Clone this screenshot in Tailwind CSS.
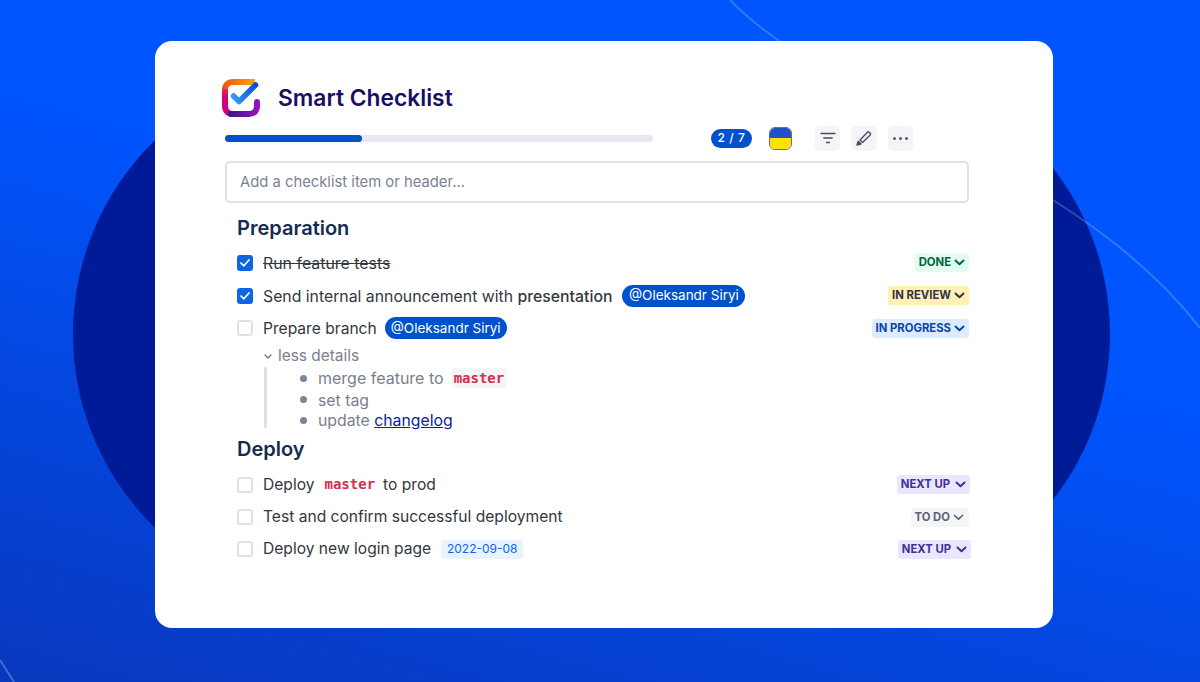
<!DOCTYPE html>
<html lang="en">
<head>
  <meta charset="UTF-8" />
  <meta name="viewport" content="width=device-width, initial-scale=1.0" />
  <title>Smart Checklist</title>
  <script src="https://cdn.jsdelivr.net/npm/@tailwindcss/browser@4"></script>
</head>
<body class="m-0 overflow-hidden font-['Inter',sans-serif]">
  <div class="relative w-[1200px] h-[682px] overflow-hidden bg-linear-[195deg] from-[#0055ff] from-40% to-[#0838bd] pt-[41px] pl-[155px]">
    <!-- background shapes -->
    <div class="absolute left-[73px] top-[64px] w-[1037px] h-[540px] rounded-full bg-[#001b98]"></div>
    <svg class="absolute inset-0" width="1200" height="682" viewBox="0 0 1200 682" fill="none">
      <path d="M730 0C790 62 900 110 1053 200C1100 230 1155 270 1200 328" stroke="#ffffff" stroke-opacity="0.2" stroke-width="2" />
      <path d="M0 660L14 682" stroke="#ffffff" stroke-opacity="0.25" stroke-width="2" />
    </svg>

    <!-- card -->
    <div class="relative w-[898px] h-[587px] bg-white rounded-[17px] pl-[70px] pr-[84px] pt-[38px]">
      <!-- title -->
      <div class="flex items-center h-[37px] -ml-[3px] gap-[18px]">
        <svg width="38" height="38" viewBox="0 0 38 38" fill="none">
          <defs>
            <linearGradient id="logoTop" x1="0" y1="0" x2="38" y2="0" gradientUnits="userSpaceOnUse">
              <stop offset="0" stop-color="#ee4f1c" />
              <stop offset="1" stop-color="#fbb400" />
            </linearGradient>
            <linearGradient id="logoLeft" x1="0" y1="4" x2="0" y2="36" gradientUnits="userSpaceOnUse">
              <stop offset="0" stop-color="#e8462f" />
              <stop offset="0.45" stop-color="#d3007a" />
              <stop offset="1" stop-color="#c8008c" />
            </linearGradient>
            <linearGradient id="logoBottom" x1="5" y1="0" x2="37" y2="0" gradientUnits="userSpaceOnUse">
              <stop offset="0" stop-color="#2c1a7a" />
              <stop offset="1" stop-color="#9a10c4" />
            </linearGradient>
            <linearGradient id="logoCheck" x1="10" y1="18" x2="36" y2="4" gradientUnits="userSpaceOnUse">
              <stop offset="0" stop-color="#2f9bff" />
              <stop offset="1" stop-color="#0a45c8" />
            </linearGradient>
          </defs>
          <path d="M3 11C3 6 6 3 11 3H33" stroke="url(#logoTop)" stroke-width="6" />
          <path d="M3 10V27C3 32 6 35 11 35" stroke="url(#logoLeft)" stroke-width="6" />
          <path d="M9 35H27C32 35 35 32 35 27V23" stroke="url(#logoBottom)" stroke-width="6" stroke-linecap="round" />
          <path d="M11.5 17L17 22.5L33.5 6" stroke="url(#logoCheck)" stroke-width="5.5" stroke-linecap="round" stroke-linejoin="round" />
        </svg>
        <h1 class="text-[22.8px] leading-none font-semibold text-[#1a0e63] translate-y-[1px]">Smart Checklist</h1>
      </div>

      <!-- progress and toolbar -->
      <div class="flex items-center h-[26px] mt-[9px]">
        <div class="w-[428px] h-[7px] rounded-full bg-[#e6e8f0]">
          <div class="h-full rounded-full bg-[#0052cc]" style="width: 32%"></div>
        </div>
        <span class="ml-[58px] w-[41px] h-[19px] flex items-center justify-center rounded-full bg-[#0052cc] text-white text-[12px] font-medium tracking-[0.6px]">2 / 7</span>
        <div class="ml-[17px] w-[23px] h-[23px] rounded-[6px] overflow-hidden border border-[#6b6f80] flex flex-col">
          <div class="h-[10px] bg-[#1f52c8]"></div>
          <div class="flex-1 bg-[#ffe200]"></div>
        </div>
        <button class="ml-[23px] w-[25px] h-[25px] rounded-[5px] bg-[#f5f5f7] flex items-center justify-center">
          <svg width="16" height="14" viewBox="0 0 16 14" fill="none" stroke="#4a4d63" stroke-width="1.5" stroke-linecap="round"><path d="M1 2.5H15M3.8 7H12.2M6.6 11.5H9.4" /></svg>
        </button>
        <button class="ml-[11px] w-[26px] h-[25px] rounded-[5px] bg-[#f5f5f7] flex items-center justify-center">
          <svg width="16" height="16" viewBox="0 0 16 16" fill="none" stroke="#4a4d63" stroke-width="1.4" stroke-linejoin="round"><path d="M4 10L11.5 2.2C12 1.7 12.6 1.7 13.1 2.2L14.2 3.3C14.7 3.8 14.7 4.4 14.2 4.9L6.5 12.5Z" /><path d="M1 15L2.2 11.3L5 14Z" fill="#4a4d63" /></svg>
        </button>
        <button class="ml-[11px] w-[25px] h-[25px] rounded-[5px] bg-[#f5f5f7] flex items-center justify-center">
          <svg width="17" height="5" viewBox="0 0 17 5" fill="#555a70"><circle cx="2.5" cy="2.5" r="1.5" /><circle cx="8.5" cy="2.5" r="1.5" /><circle cx="14.5" cy="2.5" r="1.5" /></svg>
        </button>
      </div>

      <!-- add item -->
      <div class="mt-[10px] h-[42px] border-2 border-[#dfe1e6] rounded-[5px] flex items-center pl-[13px] text-[14.8px] text-[#7a8296]">Add a checklist item or header...</div>

      <!-- Preparation -->
      <h2 class="mt-[11px] ml-[12px] h-[27px] flex items-center text-[20px] font-semibold text-[#172b4d]">Preparation</h2>

      <div class="mt-[5px] flex items-center h-[33px] text-[15.9px] text-[#333740]">
        <span class="ml-[12px] w-[16px] h-[16px] rounded-[3px] bg-[#0c66e4] flex items-center justify-center">
          <svg width="10" height="8" viewBox="0 0 10 8" fill="none" stroke="#ffffff" stroke-width="1.7" stroke-linecap="round" stroke-linejoin="round"><path d="M1 4L3.8 6.8L9 1" /></svg>
        </span>
        <span class="ml-[10px] translate-y-px line-through">Run feature tests</span>
        <span class="ml-auto h-[19px] pl-[4px] pr-[4px] rounded-[3px] bg-[#e3fcef] flex items-center gap-[3px] text-[11.3px] font-bold text-[#006644]">DONE
          <svg width="11" height="7" viewBox="0 0 11 7" fill="none" stroke="currentColor" stroke-width="2" stroke-linecap="round" stroke-linejoin="round"><path d="M1.5 1.5L5.5 5.2L9.5 1.5" /></svg>
        </span>
      </div>

      <div class="flex items-center h-[33px] text-[15.8px] text-[#333740]">
        <span class="ml-[12px] w-[16px] h-[16px] rounded-[3px] bg-[#0c66e4] flex items-center justify-center">
          <svg width="10" height="8" viewBox="0 0 10 8" fill="none" stroke="#ffffff" stroke-width="1.7" stroke-linecap="round" stroke-linejoin="round"><path d="M1 4L3.8 6.8L9 1" /></svg>
        </span>
        <span class="ml-[10px] translate-y-px">Send internal announcement with <span class="font-medium">presentation</span></span>
        <span class="ml-[10px] h-[22px] w-[123px] justify-center rounded-full bg-[#0052cc] text-white text-[13.5px] flex items-center">@Oleksandr Siryi</span>
        <span class="ml-auto h-[19px] pl-[4px] pr-[4px] rounded-[3px] bg-[#fff0b3] flex items-center gap-[3px] text-[11.3px] font-bold text-[#2f3448]">IN REVIEW
          <svg width="11" height="7" viewBox="0 0 11 7" fill="none" stroke="currentColor" stroke-width="2" stroke-linecap="round" stroke-linejoin="round"><path d="M1.5 1.5L5.5 5.2L9.5 1.5" /></svg>
        </span>
      </div>

      <div class="flex items-center h-[32px] text-[15.6px] text-[#333740]">
        <span class="ml-[12px] w-[16px] h-[16px] rounded-[3px] border-2 border-[#dfe1e8] bg-white"></span>
        <span class="ml-[10px] translate-y-px">Prepare branch</span>
        <span class="ml-[8px] h-[22px] w-[122px] justify-center rounded-full bg-[#0052cc] text-white text-[13.5px] flex items-center">@Oleksandr Siryi</span>
        <span class="ml-auto h-[19px] pl-[4px] pr-[4px] rounded-[3px] bg-[#deebff] flex items-center gap-[3px] text-[11.3px] font-bold text-[#0747a6]">IN PROGRESS
          <svg width="11" height="7" viewBox="0 0 11 7" fill="none" stroke="currentColor" stroke-width="2" stroke-linecap="round" stroke-linejoin="round"><path d="M1.5 1.5L5.5 5.2L9.5 1.5" /></svg>
        </span>
      </div>

      <!-- details -->
      <div class="mt-[1px] ml-[39px] h-[22px] flex items-center text-[15.4px] text-[#7a7f8c]">
        <svg width="8" height="5" viewBox="0 0 8 5" fill="none" stroke="#6b7080" stroke-width="1.2" stroke-linecap="round" stroke-linejoin="round"><path d="M1 1L4 4L7 1" /></svg>
        <span class="ml-[6px]">less details</span>
      </div>
      <ul class="ml-[39px] border-l-[3px] border-[#dfe1e6] h-[61px] pl-[33px] text-[15.8px] text-[#7a7f8c]">
        <li class="h-[22px] flex items-center">
          <span class="w-[7px] h-[7px] rounded-full bg-[#7a86a0]"></span>
          <span class="ml-[11px] text-[16px]">merge feature to</span>
          <code class="ml-[8px] h-[20px] px-[2px] rounded-[3px] bg-[#f4f5f7] flex items-center text-[14px] font-bold text-[#d32d4f] font-['DejaVu_Sans_Mono',monospace]">master</code>
        </li>
        <li class="h-[21px] flex items-center">
          <span class="w-[7px] h-[7px] rounded-full bg-[#7a86a0]"></span>
          <span class="ml-[11px] translate-y-px">set tag</span>
        </li>
        <li class="h-[21px] flex items-center">
          <span class="w-[7px] h-[7px] rounded-full bg-[#7a86a0]"></span>
          <span class="ml-[11px]">update <a class="text-[#0a1f9e] underline">changelog</a></span>
        </li>
      </ul>

      <!-- Deploy -->
      <h2 class="mt-[7px] ml-[12px] h-[27px] flex items-center text-[20px] font-semibold text-[#172b4d]">Deploy</h2>

      <div class="mt-[6px] flex items-center h-[33px] text-[15.6px] text-[#333740]">
        <span class="ml-[12px] w-[16px] h-[16px] rounded-[3px] border-2 border-[#dfe1e8] bg-white"></span>
        <span class="ml-[10px]">Deploy</span>
        <code class="ml-[10px] text-[14px] font-bold text-[#d32d4f] font-['DejaVu_Sans_Mono',monospace]">master</code>
        <span class="ml-[8px]">to prod</span>
        <span class="ml-auto -mr-[1px] h-[19px] pl-[4px] pr-[4px] rounded-[3px] bg-[#eae6ff] flex items-center gap-[5px] text-[11.3px] font-bold text-[#403294]">NEXT UP
          <svg width="11" height="7" viewBox="0 0 11 7" fill="none" stroke="currentColor" stroke-width="2" stroke-linecap="round" stroke-linejoin="round"><path d="M1.5 1.5L5.5 5.2L9.5 1.5" /></svg>
        </span>
      </div>

      <div class="flex items-center h-[32px] text-[15.6px] text-[#333740]">
        <span class="ml-[12px] w-[16px] h-[16px] rounded-[3px] border-2 border-[#dfe1e8] bg-white"></span>
        <span class="ml-[10px]">Test and confirm successful deployment</span>
        <span class="ml-auto h-[19px] pl-[4px] pr-[5px] rounded-[3px] bg-[#f4f5f7] flex items-center gap-[3px] text-[11.3px] font-bold text-[#5e6278]">TO DO
          <svg width="11" height="7" viewBox="0 0 11 7" fill="none" stroke="currentColor" stroke-width="1.7" stroke-linecap="round" stroke-linejoin="round"><path d="M1.5 1.5L5.5 5.2L9.5 1.5" /></svg>
        </span>
      </div>

      <div class="flex items-center h-[32px] text-[15.6px] text-[#333740]">
        <span class="ml-[12px] w-[16px] h-[16px] rounded-[3px] border-2 border-[#dfe1e8] bg-white"></span>
        <span class="ml-[10px]">Deploy new login page</span>
        <span class="ml-[10px] h-[19px] w-[82px] justify-center rounded-[3px] bg-[#e9f2ff] text-[#0c66e4] text-[12px] flex items-center">2022-09-08</span>
        <span class="ml-auto -mr-[2px] h-[19px] pl-[4px] pr-[4px] rounded-[3px] bg-[#eae6ff] flex items-center gap-[5px] text-[11.3px] font-bold text-[#403294]">NEXT UP
          <svg width="11" height="7" viewBox="0 0 11 7" fill="none" stroke="currentColor" stroke-width="2" stroke-linecap="round" stroke-linejoin="round"><path d="M1.5 1.5L5.5 5.2L9.5 1.5" /></svg>
        </span>
      </div>
    </div>
  </div>
</body>
</html>
